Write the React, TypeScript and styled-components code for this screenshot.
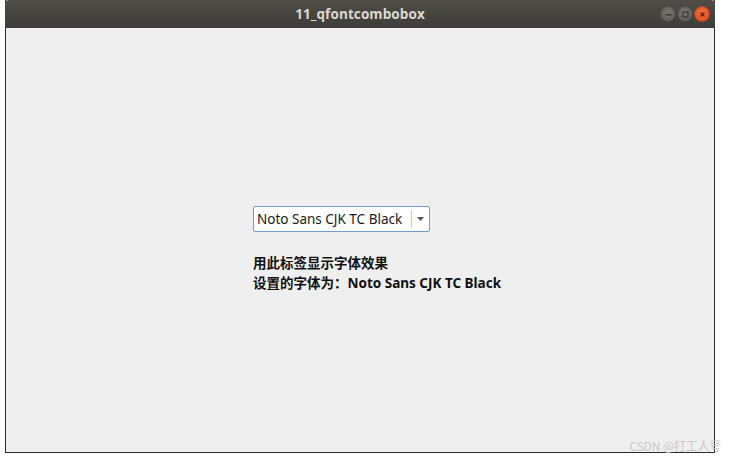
import * as React from "react";
import styled, { createGlobalStyle } from "styled-components";

const GlobalStyle = createGlobalStyle`
  html, body {
    margin: 0;
    padding: 0;
    background: #ffffff;
    font-family: "Noto Sans", "Noto Sans CJK SC", sans-serif;
  }
`;

const Page = styled.div`
  position: relative;
  width: 731px;
  height: 459px;
  padding: 0 0 0 5px;
  box-sizing: border-box;
`;

const Window = styled.div`
  width: 710px;
  height: 453px;
  display: flex;
  flex-direction: column;
  border: 1px solid #2c2c2c;
  border-top: none;
  box-sizing: border-box;
  background: #efefef;
`;

const TitleBar = styled.div`
  height: 28px;
  flex: none;
  display: flex;
  align-items: center;
  justify-content: center;
  position: relative;
  background: linear-gradient(#4f4d48, #3d3c38);
  border-radius: 4px 4px 0 0;
  margin: 0 -1px;
`;

const Title = styled.div`
  color: #dcd8cf;
  font-family: "Open Sans", "Noto Sans", sans-serif;
  font-weight: 700;
  font-size: 13.5px;
  letter-spacing: 0.1px;
`;

const Controls = styled.div`
  position: absolute;
  right: 5px;
  top: 6px;
  display: flex;
  gap: 1px;
`;

const Circle = styled.div<{ $close?: boolean }>`
  width: 16px;
  height: 16px;
  border-radius: 50%;
  display: flex;
  align-items: center;
  justify-content: center;
  background: ${(p) =>
    p.$close
      ? "radial-gradient(circle at 50% 40%, #f2703f, #d9461a)"
      : "radial-gradient(circle at 50% 40%, #75736e, #585752)"};
  box-shadow: inset 0 0 0 1px rgba(0, 0, 0, 0.25);
`;

const Content = styled.div`
  flex: 1;
  padding: 178px 0 0 247px;
  display: flex;
  flex-direction: column;
  align-items: flex-start;
`;

const Combo = styled.div`
  width: 177px;
  height: 26px;
  box-sizing: border-box;
  display: flex;
  align-items: stretch;
  background: #ffffff;
  border: 1px solid #6f9bc9;
  border-radius: 2px;
`;

const ComboText = styled.div`
  flex: 1;
  display: flex;
  align-items: center;
  padding-left: 3px;
  font-family: "Noto Sans", sans-serif;
  font-size: 13.5px;
  color: #1a1a1a;
  white-space: nowrap;
`;

const ComboButton = styled.div`
  width: 17px;
  display: flex;
  align-items: center;
  justify-content: center;
  border-left: 1px solid #c9c9c9;
  margin: 3px 0;
`;

const Labels = styled.div`
  margin-top: 21px;
  display: flex;
  flex-direction: column;
  font-family: "Noto Sans CJK SC", "Noto Sans", sans-serif;
  font-weight: 700;
  font-size: 13.5px;
  color: #111111;
`;

const LabelLine = styled.div`
  height: 19.6px;
  line-height: 19.6px;
  white-space: nowrap;
`;

const Latin = styled.span`
  font-family: "Noto Sans", "Noto Sans CJK SC", sans-serif;
  font-weight: 700;
`;

const Watermark = styled.div`
  position: absolute;
  right: 10px;
  bottom: 5px;
  font-family: "Noto Sans CJK SC", sans-serif;
  font-size: 12px;
  color: #c9c9c9;
  letter-spacing: -0.2px;
`;

export default function App() {
  return (
    <>
      <GlobalStyle />
      <Page>
        <Window>
          <TitleBar>
            <Title>11_qfontcombobox</Title>
            <Controls>
              <Circle>
                <svg width="9" height="9" viewBox="0 0 9 9">
                  <rect x="1.5" y="4" width="6" height="1.5" fill="#3a3935" />
                </svg>
              </Circle>
              <Circle>
                <svg width="9" height="9" viewBox="0 0 9 9">
                  <rect x="2" y="2" width="5" height="5" fill="none" stroke="#3a3935" strokeWidth="1.2" />
                </svg>
              </Circle>
              <Circle $close>
                <svg width="9" height="9" viewBox="0 0 9 9">
                  <path d="M2.5 2.5 L6.5 6.5 M6.5 2.5 L2.5 6.5" stroke="#5a2010" strokeWidth="1.3" />
                </svg>
              </Circle>
            </Controls>
          </TitleBar>
          <Content>
            <Combo>
              <ComboText>Noto Sans CJK TC Black</ComboText>
              <ComboButton>
                <svg width="7" height="4" viewBox="0 0 7 4">
                  <path d="M0 0 L7 0 L3.5 4 Z" fill="#555555" />
                </svg>
              </ComboButton>
            </Combo>
            <Labels>
              <LabelLine>用此标签显示字体效果</LabelLine>
              <LabelLine>
                设置的字体为：<Latin>Noto Sans CJK TC Black</Latin>
              </LabelLine>
            </Labels>
          </Content>
        </Window>
        <Watermark>CSDN @打工人号</Watermark>
      </Page>
    </>
  );
}
